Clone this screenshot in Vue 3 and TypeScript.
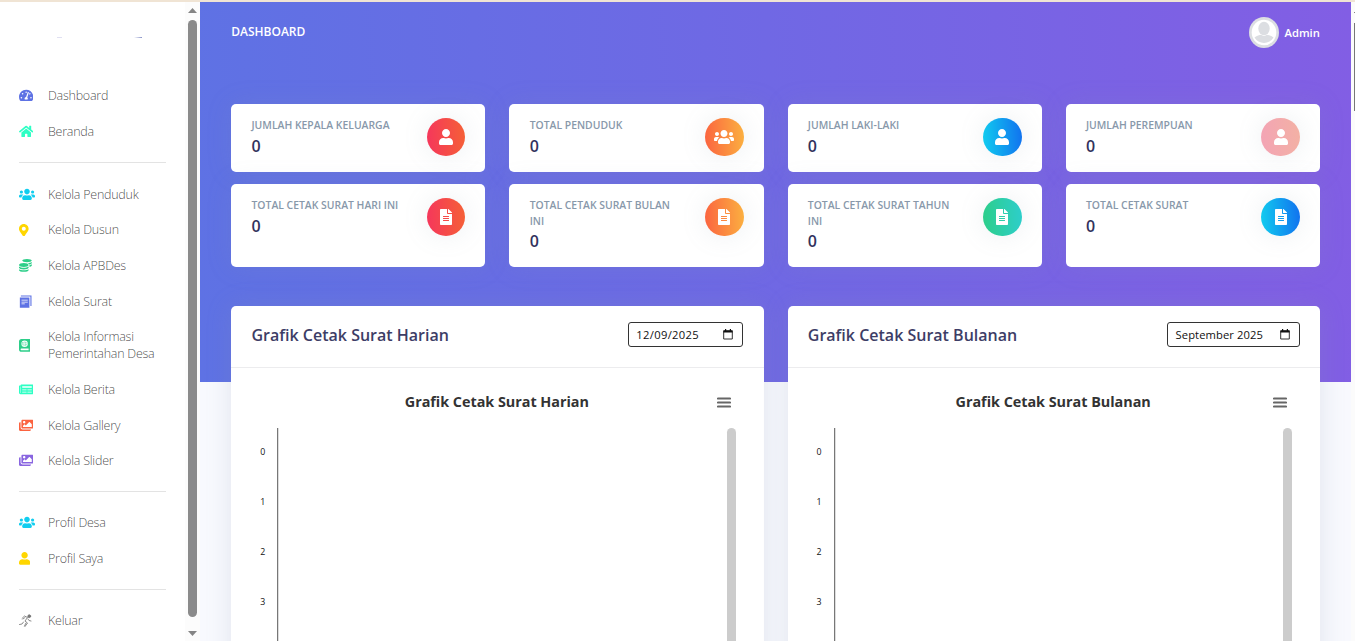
<script setup lang="ts">
interface MenuItem { label: string; icon: string; color: string; tall?: boolean }
interface Stat { label: string; icon: string; tone: string }

const icons: Record<string, { w: number; d: string }> = {
  gauge: { w: 576, d: 'M288 32C128.94 32 0 160.94 0 320c0 52.8 14.25 102.26 39.06 144.8 5.61 9.62 16.3 15.2 27.44 15.2h443c11.14 0 21.83-5.58 27.44-15.2C561.75 422.26 576 372.8 576 320c0-159.06-128.94-288-288-288zm0 64c14.71 0 26.58 10.13 30.32 23.65-1.11 2.26-2.64 4.23-3.45 6.67l-9.22 27.67c-5.13 3.49-10.97 6.01-17.64 6.01-17.67 0-32-14.33-32-32S270.33 96 288 96zM96 384c-17.67 0-32-14.33-32-32s14.33-32 32-32 32 14.33 32 32-14.33 32-32 32zm48-160c-17.67 0-32-14.33-32-32s14.33-32 32-32 32 14.33 32 32-14.33 32-32 32zm246.77-72.41l-61.33 184C343.13 347.33 352 364.54 352 384c0 11.72-3.38 22.55-8.88 32H232.88c-5.5-9.45-8.88-20.28-8.88-32 0-33.94 26.5-61.43 59.9-63.59l61.34-184.01c4.17-12.56 17.73-19.45 30.36-15.17 12.57 4.19 19.35 17.79 15.17 30.36zm14.66 57.2l15.52-46.55c3.47-1.29 7.13-2.23 11.05-2.23 17.67 0 32 14.33 32 32s-14.33 32-32 32c-11.38-.01-20.89-6.28-26.57-15.22zM480 384c-17.67 0-32-14.33-32-32s14.33-32 32-32 32 14.33 32 32-14.33 32-32 32z' },
  home: { w: 576, d: 'M280.37 148.26L96 300.11V464a16 16 0 0 0 16 16l112.06-.29a16 16 0 0 0 15.92-16V368a16 16 0 0 1 16-16h64a16 16 0 0 1 16 16v95.64a16 16 0 0 0 16 16.05L464 480a16 16 0 0 0 16-16V300L295.67 148.26a12.19 12.19 0 0 0-15.3 0zM571.6 251.47L488 182.56V44.05a12 12 0 0 0-12-12h-56a12 12 0 0 0-12 12v72.61L318.47 43a48 48 0 0 0-61 0L4.34 251.47a12 12 0 0 0-1.6 16.9l25.5 31A12 12 0 0 0 45.15 301l235.22-193.74a12.19 12.19 0 0 1 15.3 0L530.9 301a12 12 0 0 0 16.9-1.6l25.5-31a12 12 0 0 0-1.7-16.93z' },
  users: { w: 640, d: 'M96 224c35.3 0 64-28.7 64-64s-28.7-64-64-64-64 28.7-64 64 28.7 64 64 64zm448 0c35.3 0 64-28.7 64-64s-28.7-64-64-64-64 28.7-64 64 28.7 64 64 64zm32 32h-64c-17.6 0-33.5 7.1-45.1 18.6 40.3 22.1 68.9 62 75.1 109.4h66c17.7 0 32-14.3 32-32v-32c0-35.3-28.7-64-64-64zm-256 0c61.9 0 112-50.1 112-112S381.9 32 320 32 208 82.1 208 144s50.1 112 112 112zm76.8 32h-8.3c-20.8 10-43.9 16-68.5 16s-47.6-6-68.5-16h-8.3C179.6 288 128 339.6 128 403.2V432c0 26.5 21.5 48 48 48h288c26.5 0 48-21.5 48-48v-28.8c0-63.6-51.6-115.2-115.2-115.2zm-223.7-13.4C161.5 263.1 145.6 256 128 256H64c-35.3 0-64 28.7-64 64v32c0 17.7 14.3 32 32 32h65.9c6.3-47.4 34.9-87.3 75.2-109.4z' },
  pin: { w: 384, d: 'M172.268 501.67C26.97 291.031 0 269.413 0 192 0 85.961 85.961 0 192 0s192 85.961 192 192c0 77.413-26.97 99.031-172.268 309.67-9.535 13.774-29.93 13.773-39.464 0zM192 272c44.183 0 80-35.817 80-80s-35.817-80-80-80-80 35.817-80 80 35.817 80 80 80z' },
  coins: { w: 512, d: 'M0 405.3V448c0 35.3 86 64 192 64s192-28.7 192-64v-42.7C342.7 434.4 267.2 448 192 448S41.3 434.4 0 405.3zM320 128c106 0 192-28.7 192-64S426 0 320 0 128 28.7 128 64s86 64 192 64zM0 300.4V352c0 35.3 86 64 192 64s192-28.7 192-64v-51.6c-41.3 34-116.9 51.6-192 51.6S41.3 334.4 0 300.4zm416 11c57.3-11.1 96-31.7 96-55.4v-42.7c-23.2 16.4-57.3 27.6-96 34.5v63.6zM192 160C86 160 0 195.8 0 240s86 80 192 80 192-35.8 192-80-86-80-192-80zm219.3 56.3c60-10.8 100.7-32 100.7-56.3v-42.7c-35.5 25.1-96.5 38.6-160.7 41.8 29.5 14.3 51.2 33.5 60 57.2z' },
  copy: { w: 512, d: 'M74 16H500V444H456V60H74zM34 96H416V512H34zM100 190V222H350V190zM100 266V298H350V266zM100 342V374H230V342z' },
  atlas: { w: 448, d: 'M448 358.4V25.6C448 9.6 438.4 0 422.4 0H96C41.6 0 0 41.6 0 96v320c0 54.4 41.6 96 96 96h326.4c12.8 0 25.6-9.6 25.6-25.6v-16c0-6.4-3.2-12.8-9.6-19.2-3.2-16-3.2-60.8 0-73.6 6.4-3.2 9.6-9.6 9.6-19.2zM224 64a128 128 0 1 1 0 256 128 128 0 0 1 0-256zm-14 30c-18 20-28 48-30 82h30zm28 0v82h30c-2-34-12-62-30-82zm-88 26c-20 16-30 34-34 56h34c2-22 4-38 10-56zm148 0c6 18 9 34 10 56h24c-4-22-14-40-34-56zm-182 88c4 24 14 42 34 54-6-18-9-34-10-54zm64 0c2 34 12 62 30 82v-82zm58 0v82c18-20 28-48 30-82zm60 0c-1 20-4 36-10 54 20-12 30-30 34-54zM384 448H96c-19.2 0-32-12.8-32-32s16-32 32-32h288z' },
  news: { w: 576, d: 'M552 64H88c-13.255 0-24 10.745-24 24v8H24c-13.255 0-24 10.745-24 24v272c0 30.928 25.072 56 56 56h472c26.51 0 48-21.49 48-48V88c0-13.255-10.745-24-24-24zM56 400a8 8 0 0 1-8-8V144h16v248a8 8 0 0 1-8 8zm236-16H140c-6.627 0-12-5.373-12-12v-8c0-6.627 5.373-12 12-12h152c6.627 0 12 5.373 12 12v8c0 6.627-5.373 12-12 12zm208 0H348c-6.627 0-12-5.373-12-12v-8c0-6.627 5.373-12 12-12h152c6.627 0 12 5.373 12 12v8c0 6.627-5.373 12-12 12zm-208-96H140c-6.627 0-12-5.373-12-12v-8c0-6.627 5.373-12 12-12h152c6.627 0 12 5.373 12 12v8c0 6.627-5.373 12-12 12zm208 0H348c-6.627 0-12-5.373-12-12v-8c0-6.627 5.373-12 12-12h152c6.627 0 12 5.373 12 12v8c0 6.627-5.373 12-12 12zm0-96H140c-6.627 0-12-5.373-12-12v-40c0-6.627 5.373-12 12-12h360c6.627 0 12 5.373 12 12v40c0 6.627-5.373 12-12 12z' },
  images: { w: 576, d: 'M480 416v16c0 26.51-21.49 48-48 48H48c-26.51 0-48-21.49-48-48V176c0-26.51 21.49-48 48-48h16v208c0 44.112 35.888 80 80 80h336zm96-80V80c0-26.51-21.49-48-48-48H144c-26.51 0-48 21.49-48 48v256c0 26.51 21.49 48 48 48h384c26.51 0 48-21.49 48-48zM256 128c0 26.51-21.49 48-48 48s-48-21.49-48-48 21.49-48 48-48 48 21.49 48 48zm-96 144l55.515-55.515c4.686-4.686 12.284-4.686 16.971 0L272 256l135.515-135.515c4.686-4.686 12.284-4.686 16.971 0L512 208v112H160v-48z' },
  user: { w: 448, d: 'M224 256c70.7 0 128-57.3 128-128S294.7 0 224 0 96 57.3 96 128s57.3 128 128 128zm89.6 32h-16.7c-22.2 10.2-46.9 16-72.9 16s-50.6-5.8-72.9-16h-16.7C60.2 288 0 348.2 0 422.4V464c0 26.5 21.5 48 48 48h352c26.5 0 48-21.5 48-48v-41.6c0-74.2-60.2-134.4-134.4-134.4z' },
  file: { w: 384, d: 'M224 136V0H24C10.7 0 0 10.7 0 24v464c0 13.3 10.7 24 24 24h336c13.3 0 24-10.7 24-24V160H248c-13.2 0-24-10.8-24-24zm64 236c0 6.6-5.4 12-12 12H108c-6.6 0-12-5.4-12-12v-8c0-6.6 5.4-12 12-12h168c6.6 0 12 5.4 12 12v8zm0-64c0 6.6-5.4 12-12 12H108c-6.6 0-12-5.4-12-12v-8c0-6.6 5.4-12 12-12h168c6.6 0 12 5.4 12 12v8zm0-72v8c0 6.6-5.4 12-12 12H108c-6.6 0-12-5.4-12-12v-8c0-6.6 5.4-12 12-12h168c6.6 0 12 5.4 12 12zm96-114.1v6.1H256V0h6.1c6.4 0 12.5 2.5 17 7l97.9 98c4.5 4.5 7 10.6 7 16.9z' },
}

const groups: MenuItem[][] = [
  [
    { label: 'Dashboard', icon: 'gauge', color: 'primary' },
    { label: 'Beranda', icon: 'home', color: 'mint' },
  ],
  [
    { label: 'Kelola Penduduk', icon: 'users', color: 'info' },
    { label: 'Kelola Dusun', icon: 'pin', color: 'yellow' },
    { label: 'Kelola APBDes', icon: 'coins', color: 'success' },
    { label: 'Kelola Surat', icon: 'copy', color: 'primary' },
    { label: 'Kelola Informasi Pemerintahan Desa', icon: 'atlas', color: 'success', tall: true },
    { label: 'Kelola Berita', icon: 'news', color: 'mint' },
    { label: 'Kelola Gallery', icon: 'images', color: 'orange' },
    { label: 'Kelola Slider', icon: 'images', color: 'purple' },
  ],
  [
    { label: 'Profil Desa', icon: 'users', color: 'info' },
    { label: 'Profil Saya', icon: 'user', color: 'yellow' },
  ],
  [{ label: 'Keluar', icon: 'run', color: 'gray' }],
]

const stats: Stat[] = [
  { label: 'Jumlah Kepala Keluarga', icon: 'user', tone: 'red' },
  { label: 'Total Penduduk', icon: 'users', tone: 'amber' },
  { label: 'Jumlah Laki-Laki', icon: 'user', tone: 'blue' },
  { label: 'Jumlah Perempuan', icon: 'user', tone: 'pink' },
  { label: 'Total Cetak Surat Hari Ini', icon: 'file', tone: 'red' },
  { label: 'Total Cetak Surat Bulan Ini', icon: 'file', tone: 'amber' },
  { label: 'Total Cetak Surat Tahun Ini', icon: 'file', tone: 'green' },
  { label: 'Total Cetak Surat', icon: 'file', tone: 'blue' },
]

const charts = [
  { title: 'Grafik Cetak Surat Harian', value: '12/09/2025', kind: 'date' },
  { title: 'Grafik Cetak Surat Bulanan', value: 'September 2025', kind: 'month' },
]
const ticks = [0, 1, 2, 3]
</script>

<template>
  <div class="page">
    <aside class="sidebar">
      <nav class="menu">
        <div class="logo"><i class="speck a"></i><i class="speck b"></i></div>
        <div v-for="(g, gi) in groups" :key="gi" class="group">
          <a v-for="m in g" :key="m.label" class="item" :class="{ tall: m.tall }">
            <span class="ico" :class="m.color">
              <svg v-if="m.icon === 'run'" width="13" height="13" viewBox="0 0 26 26" fill="none" stroke="currentColor" stroke-width="1.7" stroke-linejoin="round" stroke-linecap="round">
                <circle cx="20.500" cy="4.500" r="2.800" fill="currentColor" />
                <path d="M6 9l5-5 6 3-5 7 5 4-5 7M18 10l2 3 4 1M9 16l-3 4-5 1M14 18l-3 6M8 10l4-3" />
              </svg>
              <svg v-else :width="icons[m.icon].w * 12.8 / 512" height="12.8" :viewBox="`0 0 ${icons[m.icon].w} 512`">
                <path :d="icons[m.icon].d" fill="currentColor" fill-rule="evenodd" />
              </svg>
            </span>
            <span class="txt">{{ m.label }}</span>
          </a>
        </div>
      </nav>
      <div class="bar">
        <svg width="9" height="5" viewBox="0 0 9 5"><path d="M4.5 0L9 5H0z" fill="#858585" /></svg>
        <div class="thumb"></div>
        <svg width="9" height="5" viewBox="0 0 9 5"><path d="M0 0h9L4.5 5z" fill="#858585" /></svg>
      </div>
    </aside>

    <main class="main">
      <header class="top">
        <span class="crumb">Dashboard</span>
        <div class="account">
          <svg width="30" height="31" viewBox="0 0 30 31">
            <ellipse cx="15" cy="15.5" rx="15" ry="15.5" fill="#dcdee2" />
            <ellipse cx="15" cy="15.5" rx="12.3" ry="12.8" fill="#fff" />
            <ellipse cx="15" cy="11.5" rx="5.7" ry="6.7" fill="#dcdee2" />
            <path d="M5.5 20.500C8 18.500 10.500 18 12 17.800Q15 20 18 17.800C19.500 18 22 18.500 24.500 20.500A11 11 0 0 1 5.500 20.500z" fill="#dcdee2" />
          </svg>
          <span>Admin</span>
        </div>
      </header>

      <section class="stats">
        <div v-for="s in stats" :key="s.label" class="card stat">
          <div>
            <h5>{{ s.label }}</h5>
            <b>0</b>
          </div>
          <div class="badge" :class="s.tone">
            <svg :width="icons[s.icon].w / 32" height="16" :viewBox="`0 0 ${icons[s.icon].w} 512`">
              <path :d="icons[s.icon].d" fill="#fff" />
            </svg>
          </div>
        </div>
      </section>

      <section class="charts">
        <div v-for="c in charts" :key="c.title" class="card chart">
          <div class="head">
            <h2>{{ c.title }}</h2>
            <div class="field" :class="c.kind">
              <span>{{ c.value }}</span>
              <svg width="10" height="11" viewBox="0 0 10 11">
                <path d="M.7 2.200H9.300V10H.7z" fill="none" stroke="#333" stroke-width="1" />
                <path d="M.4 1.200H9.600V3.400H.4zM2 0H3.200V2H2zM6.800 0H8V2H6.800z" fill="#111" />
              </svg>
            </div>
          </div>
          <div class="title">
            <h3>{{ c.title }}</h3>
            <svg class="burger" width="14" height="12" viewBox="0 0 14 12">
              <path d="M1 1.500H13M1 5.500H13M1 9.500H13" stroke="#666" stroke-width="2.200" stroke-linecap="round" />
            </svg>
          </div>
          <div class="plot">
            <div class="ticks"><span v-for="t in ticks" :key="t">{{ t }}</span></div>
            <div class="area"></div>
            <div class="scroll"></div>
          </div>
        </div>
      </section>
    </main>

    <div class="outer"><div class="outer-arrow"></div><div class="outer-thumb"></div></div>
  </div>
</template>

<style>
html, body { overflow: hidden; background: #fff; }
</style>

<style scoped>
* { box-sizing: border-box; margin: 0; }
.page { display: flex; width: 1355px; height: 641px; overflow: hidden; border-top: 2px solid #f0e4d4; font-family: "Open Sans", "Noto Sans", sans-serif; background: #fff; }
.sidebar { display: flex; width: 200px; flex: none; background: #fff; }
.menu { width: 185px; flex: none; padding: 0 19px; }
.logo { height: 76px; display: flex; padding-top: 35px; }
.speck { height: 1px; background: #e0e0f2; }
.speck.a { width: 5px; margin-left: 38px; }
.speck.b { width: 8px; margin-left: 72px; background: linear-gradient(90deg, #fff, #8792c8); }
.group + .group { border-top: 1px solid #e3e3e3; margin-top: 12.4px; padding-top: 13px; }
.group:nth-child(3) { padding-top: 13.600px; }
.group:nth-child(3) .item:not(.tall) { height: 35.600px; }
.item { display: flex; align-items: center; height: 35.8px; }
.item.tall { height: 52.800px; }
.ico { width: 29px; height: 13px; flex: none; display: flex; align-items: center; }
.ico svg { display: block; }
.txt { font-size: 12.500px; letter-spacing: -.25px; font-weight: 300; line-height: 17px; color: rgba(0, 0, 0, .72); white-space: normal; }
.primary { color: #5e72e4; } .mint { color: #2dffc4; } .info { color: #11cdef; } .yellow { color: #ffd600; }
.success { color: #2dce89; } .orange { color: #fb6340; } .purple { color: #8965e0; } .gray { color: #777; }
.bar { width: 15px; background: #fcfcfc; display: flex; flex-direction: column; align-items: center; padding: 6px 0 5px; }
.thumb { width: 9px; flex: 1; margin: 7px 0 14px; border-radius: 5px; background: #8b8b8b; }
.main { width: 1151px; flex: none; padding: 0 31.200px; background: linear-gradient(87deg, #5e72e4, #825ee4) 0 0 / 100% 380px no-repeat #f8f9fe; }
.top { height: 102px; display: flex; justify-content: space-between; align-items: flex-start; padding-top: 15px; color: #fff; }
.crumb { font-size: 12px; font-weight: 600; line-height: 30px; text-transform: uppercase; }
.account { display: flex; align-items: center; gap: 6px; font-size: 11.200px; font-weight: 600; }
.account svg { display: block; }
.card { background: #fff; border-radius: 5px; box-shadow: 0 0 25.600px rgba(136, 152, 170, .15); }
.stats { display: grid; grid-template-columns: repeat(4, 1fr); grid-template-rows: 68px 83px; column-gap: 24px; row-gap: 12px; }
.stat { display: flex; justify-content: space-between; padding: 14px 20px 0 20.300px; }
.stat > div:first-child { width: 156px; }
.stat h5 { font-size: 10.400px; font-weight: 600; line-height: 15.600px; color: #8898aa; text-transform: uppercase; white-space: normal; }
.stat b { display: block; font-size: 16px; font-weight: 600; line-height: 24px; color: #32325d; }
.badge { width: 38.400px; height: 38.400px; border-radius: 50%; display: flex; align-items: center; justify-content: center; box-shadow: 0 0 25.600px rgba(136, 152, 170, .15); }
.badge svg { display: block; }
.red { background: linear-gradient(87deg, #f5365c, #f56036); }
.amber { background: linear-gradient(87deg, #fb6340, #fbb140); }
.blue { background: linear-gradient(87deg, #11cdef, #1171ef); }
.green { background: linear-gradient(87deg, #2dce89, #2dcecc); }
.pink { background: linear-gradient(87deg, #f3a4b5, #f3b1a4); }
.charts { display: grid; grid-template-columns: repeat(2, 1fr); column-gap: 24px; margin-top: 39px; }
.chart { height: 420px; box-shadow: 0 0 25.600px rgba(136, 152, 170, .2); }
.head { height: 62px; display: flex; justify-content: space-between; align-items: center; padding: 0 20.300px 4px; border-bottom: 1px solid #ececee; }
.head h2 { font-size: 16px; font-weight: 600; color: #3d3d66; }
.field { height: 25px; display: flex; align-items: center; justify-content: space-between; padding: 0 9px 0 8px; border: 1px solid #333; border-radius: 3px; font-size: 11.200px; color: #111; }
.date { width: 115px; letter-spacing: .35px; padding-left: 7px; }
.month { width: 133px; letter-spacing: .1px; }
.title { position: relative; height: 60px; display: flex; justify-content: center; padding: 22px 1px 0 0; }
.title h3 { font-size: 14.400px; letter-spacing: -.03px; font-weight: 700; line-height: 24px; color: #333; }
.burger { position: absolute; right: 32.400px; top: 29px; }
.plot { display: flex; height: 300px; }
.ticks { width: 46px; flex: none; padding: 12px 12px 0 0; text-align: right; font-size: 8.800px; color: #111; }
.ticks span { display: block; height: 50px; line-height: 25px; }
.area { flex: 1; border-left: 1px solid #777; box-shadow: inset 1px 0 #ddd; }
.scroll { width: 9px; border-radius: 5px; background: #ccc; margin-right: 27.400px; }
.outer { flex: 1; background: #fbfbfb; }
.outer-arrow { height: 1px; width: 1px; margin: 10px 0 0 3px; background: #858585; }
.outer-thumb { width: 1px; height: 88px; margin: 10px 0 0 3px; background: #777; }
</style>
